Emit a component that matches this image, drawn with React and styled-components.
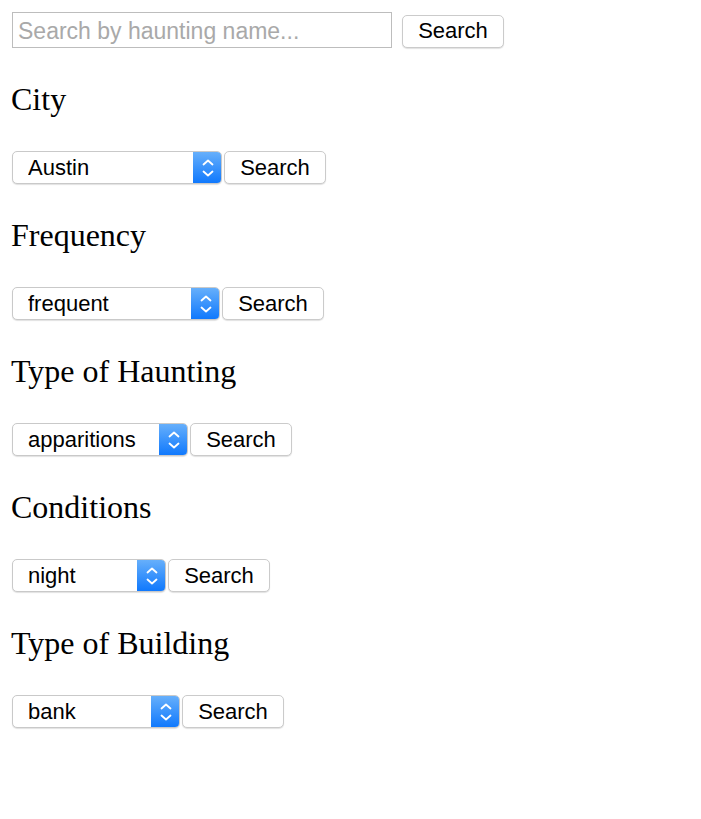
import React from 'react';
import styled, { createGlobalStyle } from 'styled-components';

const sections = [
  { title: 'City', value: 'Austin', options: ['Austin', 'Dallas', 'Houston'], width: 210 },
  { title: 'Frequency', value: 'frequent', options: ['frequent', 'occasional', 'rare'], width: 208 },
  { title: 'Type of Haunting', value: 'apparitions', options: ['apparitions', 'noises', 'cold spots'], width: 176 },
  { title: 'Conditions', value: 'night', options: ['night', 'day', 'storms'], width: 154 },
  { title: 'Type of Building', value: 'bank', options: ['bank', 'hotel', 'school'], width: 168 },
];

function Chevrons() {
  return (
    <svg width="12" height="22" viewBox="0 0 12 22" fill="none">
      <path d="M1.5 7.5 L6 3.5 L10.5 7.5" stroke="#fff" strokeWidth="1.8" strokeLinecap="round" strokeLinejoin="round" />
      <path d="M1.5 14.5 L6 18.5 L10.5 14.5" stroke="#fff" strokeWidth="1.8" strokeLinecap="round" strokeLinejoin="round" />
    </svg>
  );
}

function FilterSection({ title, value, options, width }) {
  return (
    <section>
      <Heading>{title}</Heading>
      <Row>
        <SelectBox width={width}>
          <NativeSelect defaultValue={value}>
            {options.map((option) => (
              <option key={option} value={option}>
                {option}
              </option>
            ))}
          </NativeSelect>
          <ArrowBox>
            <Chevrons />
          </ArrowBox>
        </SelectBox>
        <Button>Search</Button>
      </Row>
    </section>
  );
}

export default function App() {
  return (
    <>
      <GlobalStyle />
      <Page>
        <SearchRow>
          <SearchInput placeholder="Search by haunting name..." />
          <Button>Search</Button>
        </SearchRow>
        {sections.map((section) => (
          <FilterSection key={section.title} {...section} />
        ))}
      </Page>
    </>
  );
}

const GlobalStyle = createGlobalStyle`
  * {
    box-sizing: border-box;
  }

  body {
    margin: 0;
    background: #ffffff;
    font-family: "Liberation Sans", Arial, sans-serif;
  }
`;

const Page = styled.main`
  padding: 12px 12px 40px;
`;

const SearchRow = styled.div`
  display: flex;
  align-items: center;
  gap: 10px;
  height: 36px;

  button {
    margin-top: 2px;
  }
`;

const SearchInput = styled.input`
  width: 380px;
  height: 36px;
  border: 1px solid #bdbdbd;
  border-radius: 0;
  padding: 2px 5px 0;
  font-family: "Liberation Sans", Arial, sans-serif;
  font-size: 23px;
  color: #000000;
  outline: none;

  &::placeholder {
    color: #a9a9a9;
  }
`;

const Heading = styled.h2`
  margin: 33px 0 33px -1px;
  font-family: "Liberation Serif", "Times New Roman", serif;
  font-size: 32px;
  font-weight: 400;
  line-height: 37px;
  color: #000000;
`;

const Row = styled.div`
  display: flex;
  align-items: center;
  gap: 2px;
  height: 33px;
`;

const SelectBox = styled.div`
  display: flex;
  width: ${(props) => props.width}px;
  height: 33px;
  border: 1px solid #c9c9c9;
  border-radius: 5px;
  box-shadow: 0 1px 1px rgba(0, 0, 0, 0.12);
  background: #ffffff;
  overflow: hidden;
`;

const NativeSelect = styled.select`
  flex: 1;
  min-width: 0;
  appearance: none;
  border: none;
  background: transparent;
  padding: 0 0 0 15px;
  font-family: "Liberation Sans", Arial, sans-serif;
  font-size: 22px;
  color: #000000;
  outline: none;
`;

const ArrowBox = styled.div`
  display: flex;
  align-items: center;
  justify-content: center;
  width: 29px;
  margin: -1px -1px -1px 0;
  border-radius: 0 5px 5px 0;
  background: linear-gradient(#69b1fb, #0d77fd);
`;

const Button = styled.button`
  width: 102px;
  height: 33px;
  padding: 0;
  border: 1px solid #cbcbcb;
  border-radius: 5px;
  box-shadow: 0 1px 1px rgba(0, 0, 0, 0.12);
  background: #ffffff;
  font-family: "Liberation Sans", Arial, sans-serif;
  font-size: 22px;
  color: #000000;
`;
